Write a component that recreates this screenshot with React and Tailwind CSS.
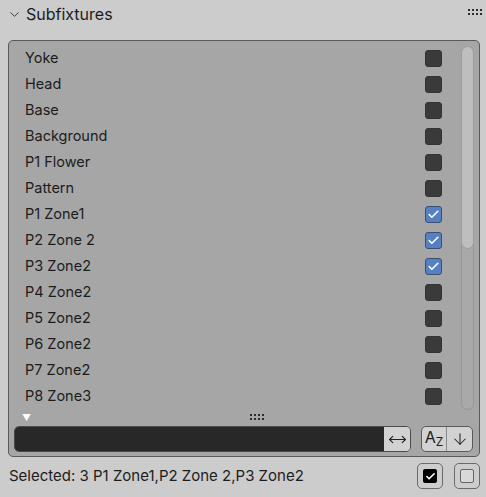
import { ChevronDown, Check, ArrowDown, MoveHorizontal } from 'lucide-react';

const items = [
  { name: 'Yoke', on: false },
  { name: 'Head', on: false },
  { name: 'Base', on: false },
  { name: 'Background', on: false },
  { name: 'P1 Flower', on: false },
  { name: 'Pattern', on: false },
  { name: 'P1 Zone1', on: true },
  { name: 'P2 Zone 2', on: true },
  { name: 'P3 Zone2', on: true },
  { name: 'P4 Zone2', on: false },
  { name: 'P5 Zone2', on: false },
  { name: 'P6 Zone2', on: false },
  { name: 'P7 Zone2', on: false },
  { name: 'P8 Zone3', on: false },
];

function Grip({ cols = 4 }) {
  return (
    <div className="grid gap-x-[2px] gap-y-[2px]" style={{ gridTemplateColumns: `repeat(${cols}, 2px)` }}>
      {Array.from({ length: cols * 2 }).map((_, i) => (
        <span key={i} className="block h-[2px] w-[2px] bg-[#2a2a2a]" />
      ))}
    </div>
  );
}

function Checkbox({ on }) {
  if (on) {
    return (
      <span className="flex h-[17px] w-[17px] items-center justify-center rounded-[3px] border border-[#3d4f6e] bg-[#5680c2]">
        <Check size={13} strokeWidth={3} className="text-white" />
      </span>
    );
  }
  return <span className="block h-[17px] w-[17px] rounded-[3px] border border-[#333] bg-[#3a3a3a]" />;
}

export default function App() {
  return (
    <div className="h-[497px] w-[486px] bg-[#cccccc] font-['Inter','Liberation_Sans',sans-serif] text-[#1c1c1c]">
      {/* Header */}
      <div className="flex h-[28px] items-center pl-[7px] pr-[4px]">
        <ChevronDown size={15} strokeWidth={1.5} className="text-[#333]" />
        <span className="ml-[4px] text-[16px] leading-none">Subfixtures</span>
        <div className="ml-auto -mt-[4px]">
          <Grip />
        </div>
      </div>

      {/* List panel */}
      <div className="ml-2 mr-[6px] mt-[12px] rounded-[5px] border border-[#5a5a5a] bg-[#a6a6a6] pb-[4px] pl-[5px] pr-[5px] pt-[4px]">
        <div className="flex">
          <div className="flex flex-1 flex-col">
            {items.map((it) => (
              <div key={it.name} className="flex h-[26px] items-center pl-[11px] pr-[18px] text-[14.5px]">
                <span>{it.name}</span>
                <span className="ml-auto">
                  <Checkbox on={it.on} />
                </span>
              </div>
            ))}
          </div>
          <div className="relative ml-[1px] mt-[1px] h-[364px] w-[13px] rounded-full border border-[#979797] bg-[#a9a9a9]">
            <div className="absolute left-[-1px] top-[-1px] h-[203px] w-[13px] rounded-full border border-[#9c9c9c] bg-[#bebebe]" />
          </div>
        </div>

        <div className="relative flex h-[14px] items-center">
          <span className="ml-[8px] text-[9px] leading-none text-white">▼</span>
          <div className="absolute left-[236px] top-[4px]">
            <Grip />
          </div>
        </div>

        <div className="mt-[2px] flex items-center">
          <div className="flex h-[26px] flex-1 overflow-hidden rounded-[5px] border border-[#4a4a4a]">
            <div className="flex-1 bg-[#282828]" />
            <div className="flex w-[26px] items-center justify-center bg-[#d2d2d2]">
              <MoveHorizontal size={19} strokeWidth={1.4} className="text-[#222]" />
            </div>
          </div>
          <div className="ml-[10px] flex h-[26px] overflow-hidden rounded-[5px] border border-[#5a5a5a] bg-[#d2d2d2]">
            <div className="flex w-[25px] items-end justify-center border-r border-[#8a8a8a] pb-[3px] leading-none">
              <span className="mb-[3px] text-[16px]">A</span>
              <span className="text-[12px]">Z</span>
            </div>
            <div className="flex w-[25px] items-center justify-center">
              <ArrowDown size={18} strokeWidth={1.4} className="text-[#222]" />
            </div>
          </div>
          <div className="w-[1px]" />
        </div>
      </div>

      {/* Footer */}
      <div className="mt-[6px] flex items-center pl-[9px] pr-[6px]">
        <span className="text-[15px]">Selected: 3 P1 Zone1,P2 Zone 2,P3 Zone2</span>
        <div className="ml-auto flex gap-[11px]">
          <button className="flex h-[26px] w-[26px] items-center justify-center rounded-[5px] border border-[#6a6a6a] bg-[#cdcdcd]">
            <span className="flex h-[14px] w-[14px] items-center justify-center rounded-[2px] bg-black">
              <Check size={11} strokeWidth={3.5} className="text-white" />
            </span>
          </button>
          <button className="flex h-[26px] w-[26px] items-center justify-center rounded-[5px] border border-[#6a6a6a] bg-[#cdcdcd]">
            <span className="h-[14px] w-[14px] rounded-[2px] border border-[#666] bg-[#d8d8d8]" />
          </button>
        </div>
      </div>
    </div>
  );
}
